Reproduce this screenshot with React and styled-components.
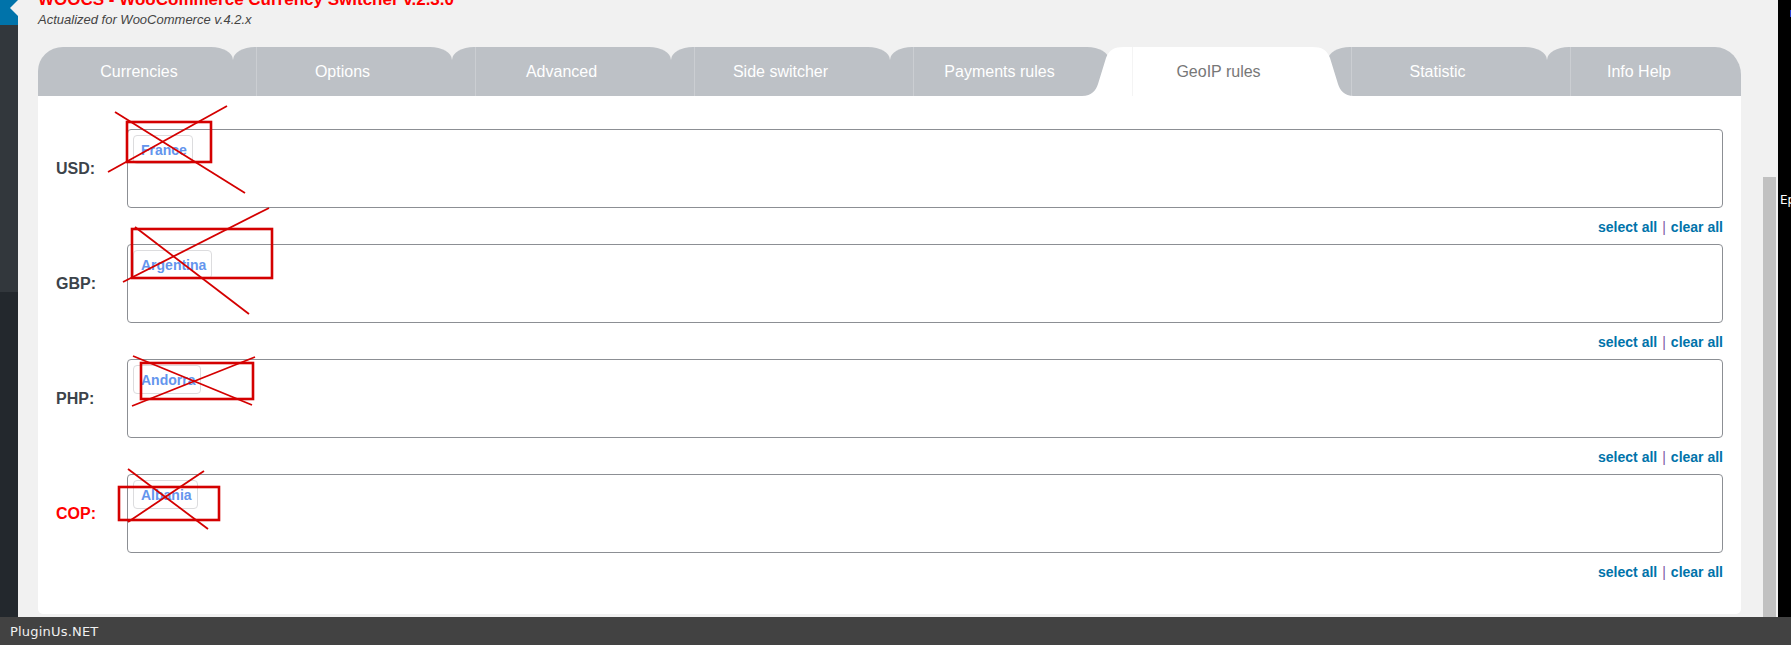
import React from "react";
import styled, { createGlobalStyle } from "styled-components";

const GlobalStyle = createGlobalStyle`
  html, body {
    margin: 0;
    padding: 0;
    overflow: hidden;
    background: #f1f1f1;
  }
  body {
    font-family: "Liberation Sans", Arial, sans-serif;
  }
`;

const Page = styled.div`
  position: relative;
  width: 1791px;
  height: 645px;
  display: flex;
  flex-direction: column;
  overflow: hidden;
`;

const Body = styled.div`
  display: flex;
  height: 617px;
`;

const Sidebar = styled.div`
  flex: 0 0 18px;
  display: flex;
  flex-direction: column;
  background: #23282d;
`;

const MenuCurrent = styled.div`
  position: relative;
  height: 25px;
  background: #0073aa;
  &::after {
    content: "";
    position: absolute;
    right: 0;
    top: 0;
    border-style: solid;
    border-width: 8px 8px 8px 0;
    border-color: transparent #f1f1f1 transparent transparent;
  }
`;

const MenuRest = styled.div`
  height: 267px;
  background: #32373c;
`;

const Main = styled.div`
  flex: 1;
  min-width: 0;
  padding: 0 22px 0 20px;
  background: #f1f1f1;
`;

const Title = styled.h2`
  margin: -10px 0 0;
  font-size: 17px;
  line-height: 20px;
  font-weight: bold;
  color: #ff0000;
`;

const Subtitle = styled.div`
  margin-top: 2px;
  font-size: 13px;
  line-height: 16px;
  font-style: italic;
  color: #444;
`;

const TabBar = styled.div`
  display: flex;
  margin-top: 19px;
`;

const radii = {
  first: "25px 22px 0 0 / 24px 13px 0 0",
  middle: "22px 22px 0 0 / 13px 13px 0 0",
  last: "22px 26px 0 0 / 13px 28px 0 0",
};

const Tab = styled.div`
  position: relative;
  z-index: ${({ $active }) => ($active ? 2 : 1)};
  flex: 0 0 ${({ $w }) => $w}px;
  height: 49px;
  box-sizing: border-box;
  padding: ${({ $pad }) => $pad || "0"};
  display: flex;
  align-items: center;
  justify-content: center;
  font-size: 16px;
  color: ${({ $active }) => ($active ? "#777" : "#fff")};
  background: ${({ $active }) => ($active ? "transparent" : "#bdc1c6")};
  border-radius: ${({ $kind }) => radii[$kind]};
  &::before {
    content: "";
    display: ${({ $kind }) => ($kind === "first" ? "none" : "block")};
    position: absolute;
    left: 23px;
    top: 0;
    bottom: 0;
    width: 1px;
    background: ${({ $active }) => ($active ? "#f4f4f4" : "#cbced2")};
  }
`;

const ActiveShape = styled.svg`
  position: absolute;
  left: -30px;
  top: 0;
  z-index: -1;
`;

const Panel = styled.div`
  background: #fff;
  border-radius: 0 0 5px 5px;
  padding: 33px 18px 25px;
`;

const Rule = styled.div`
  display: flex;
  flex-direction: column;
`;

const RuleRow = styled.div`
  display: grid;
  grid-template-columns: 71px 1fr;
  align-items: center;
`;

const Currency = styled.div`
  font-size: 16px;
  font-weight: bold;
  color: ${({ $base }) => ($base ? "#ff0000" : "#3c434a")};
`;

const CountryBox = styled.div`
  box-sizing: border-box;
  height: 79px;
  border: 1px solid #8c8f94;
  border-radius: 4px;
  background: #fff;
  padding: 5px;
  display: flex;
  align-items: flex-start;
  gap: 5px;
`;

const Chip = styled.span`
  box-sizing: border-box;
  height: 29px;
  display: inline-flex;
  align-items: center;
  padding: 0 5px 0 7px;
  border: 1px solid #dcdcde;
  border-radius: 4px;
  background: #fff;
  font-size: 14px;
  font-weight: bold;
  color: #6495ed;
`;

const Links = styled.div`
  margin: 9px 0 7px;
  height: 20px;
  line-height: 20px;
  text-align: right;
  font-size: 14px;
  font-weight: bold;
`;

const Link = styled.a`
  color: #0073aa;
  text-decoration: none;
`;

const Sep = styled.span`
  margin: 0 5px;
  font-weight: normal;
  color: #7b5aa6;
`;

const Scrollbar = styled.div`
  flex: 0 0 15px;
  display: flex;
  flex-direction: column;
  background: #f1f1f1;
`;

const Thumb = styled.div`
  margin-top: 177px;
  width: 13px;
  flex: 1;
  background: #c1c1c1;
`;

const Edge = styled.div`
  position: relative;
  flex: 0 0 13px;
  background: #000;
  overflow: hidden;
  &::before {
    content: "";
    position: absolute;
    right: 0;
    top: 10px;
    width: 1px;
    height: 7px;
    background: #2a3fd0;
  }
`;

const EdgeText = styled.div`
  margin: 193px 0 0 2px;
  font-family: "DejaVu Sans", sans-serif;
  font-size: 12px;
  color: #fff;
  white-space: nowrap;
`;

const Footer = styled.div`
  height: 28px;
  background: #424242;
  display: flex;
  align-items: center;
  padding-left: 10px;
  font-family: "DejaVu Sans", sans-serif;
  font-size: 13px;
  letter-spacing: 0.2px;
  color: #f0f0f0;
`;

const Marks = styled.svg`
  position: absolute;
  left: 0;
  top: 0;
  pointer-events: none;
`;

const tabs = [
  { label: "Currencies", w: 195, kind: "first", pad: "0 0 0 7px" },
  { label: "Options", w: 219, kind: "middle" },
  { label: "Advanced", w: 219, kind: "middle" },
  { label: "Side switcher", w: 219, kind: "middle" },
  { label: "Payments rules", w: 219, kind: "middle" },
  { label: "GeoIP rules", w: 219, kind: "middle", active: true },
  { label: "Statistic", w: 219, kind: "middle" },
  { label: "Info Help", w: 194, kind: "last", pad: "0 10px 0 0" },
];

const rules = [
  { code: "USD", country: "France" },
  { code: "GBP", country: "Argentina" },
  { code: "PHP", country: "Andorra" },
  { code: "COP", country: "Albania", base: true },
];

// red markup drawn over the screenshot
const crosses = [
  { rect: [127, 122, 84, 40], a: [115, 112, 245, 193], b: [108, 172, 227, 106] },
  { rect: [132, 229, 140, 49], a: [135, 227, 249, 314], b: [123, 282, 269, 208] },
  { rect: [141, 363, 112, 36], a: [133, 356, 252, 405], b: [132, 406, 255, 357] },
  { rect: [119, 487, 100, 33], a: [128, 469, 208, 529], b: [128, 522, 204, 471] },
];

export default function App() {
  return (
    <>
      <GlobalStyle />
      <Page>
        <Body>
          <Sidebar>
            <MenuCurrent />
            <MenuRest />
          </Sidebar>
          <Main>
            <Title>WOOCS - WooCommerce Currency Switcher v.2.3.0</Title>
            <Subtitle>Actualized for WooCommerce v.4.2.x</Subtitle>
            <TabBar>
              {tabs.map((t) => (
                <Tab key={t.label} $w={t.w} $kind={t.kind} $active={t.active} $pad={t.pad}>
                  {t.active && (
                    <ActiveShape width="279" height="49" viewBox="0 0 279 49">
                      <path
                        d="M3 49 C13 49 17 43 19 37 L27 11 C30 3 35 0 45 0 L233 0 C243 0 248 3 251 11 L259 37 C261 43 265 49 275 49 Z"
                        fill="#fff"
                      />
                    </ActiveShape>
                  )}
                  {t.label}
                </Tab>
              ))}
            </TabBar>
            <Panel>
              {rules.map((r) => (
                <Rule key={r.code}>
                  <RuleRow>
                    <Currency $base={r.base}>{r.code}:</Currency>
                    <CountryBox>
                      <Chip>{r.country}</Chip>
                    </CountryBox>
                  </RuleRow>
                  <Links>
                    <Link href="#">select all</Link>
                    <Sep>|</Sep>
                    <Link href="#">clear all</Link>
                  </Links>
                </Rule>
              ))}
            </Panel>
          </Main>
          <Scrollbar>
            <Thumb />
          </Scrollbar>
          <Edge>
            <EdgeText>Ep</EdgeText>
          </Edge>
        </Body>
        <Footer>PluginUs.NET</Footer>
        <Marks width="1791" height="645" viewBox="0 0 1791 645">
          {crosses.map((c, i) => (
            <g key={i} stroke="#d40000" fill="none">
              <rect x={c.rect[0]} y={c.rect[1]} width={c.rect[2]} height={c.rect[3]} strokeWidth="2.6" />
              <line x1={c.a[0]} y1={c.a[1]} x2={c.a[2]} y2={c.a[3]} strokeWidth="1.8" />
              <line x1={c.b[0]} y1={c.b[1]} x2={c.b[2]} y2={c.b[3]} strokeWidth="1.8" />
            </g>
          ))}
        </Marks>
      </Page>
    </>
  );
}
